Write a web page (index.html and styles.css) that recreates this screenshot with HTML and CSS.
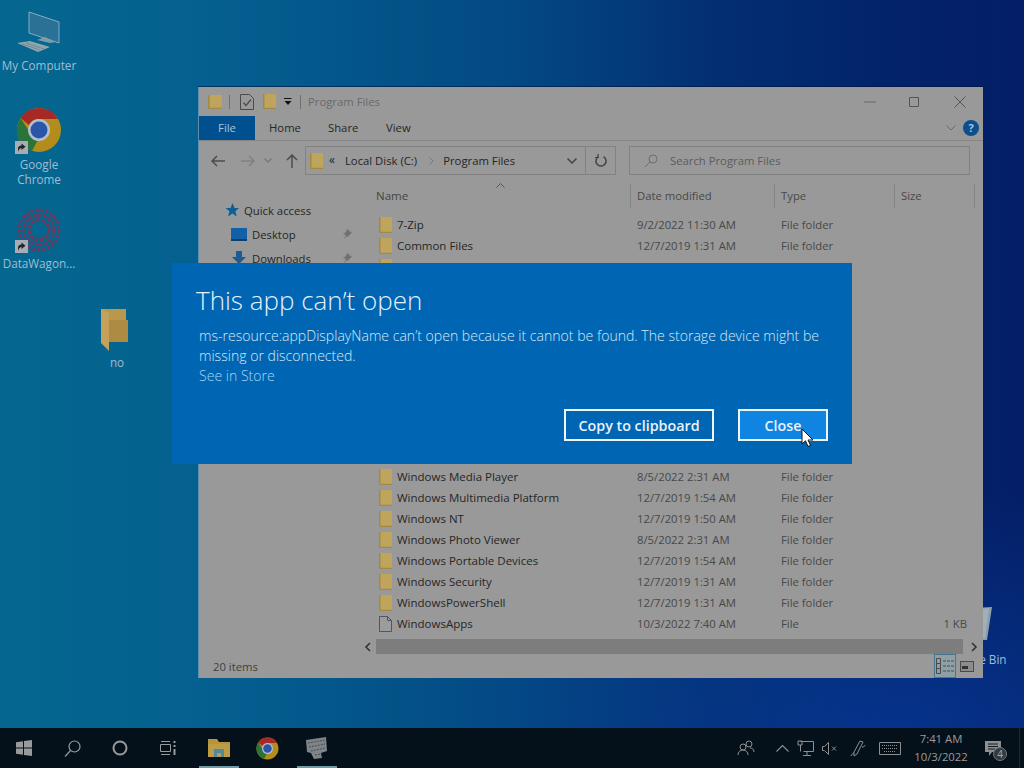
FILE: index.html
```html
<!DOCTYPE html>
<html lang="en">
<head>
  <meta charset="UTF-8">
  <title>This app can't open</title>
  <link rel="stylesheet" href="styles.css">
</head>
<body>
  <svg class="defs" width="0" height="0">
    <symbol id="folder" viewBox="1 1 13 14" preserveAspectRatio="none">
      <path d="M1 1h13v14H1z" fill="#bfa45c"/>
      <path d="M1 1h1.500v14H1zM1 13.800h13V15H1z" fill="#a38948"/>
    </symbol>
    <symbol id="shortcut" viewBox="0 0 13 13">
      <rect width="13" height="13" fill="#a9adb3"/>
      <path d="M3 11V7.500C3 5.500 4.500 4.500 6.500 4.500V2.500l4 3.200-4 3.200V7C5 7 4 8 3 11z" fill="#20262c"/>
    </symbol>
  </svg>

  <div class="desktop">
    <!-- desktop icons -->
    <div class="desk-icon icon-computer">
      <svg width="46" height="44" viewBox="0 0 46 44">
        <path d="M13 2l30 10v21L13 23z" fill="#2a7198" stroke="#86a9c4"/>
        <path d="M21 30l8-3 11 5-6 1z" fill="#7f9ba6"/>
        <path d="M1 33l13-2 20 6-12 5z" fill="#8ea6ab"/>
        <path d="M6 34l18 6M10 33l18 6" stroke="#6d8b98"/>
      </svg>
      <span>My Computer</span>
    </div>
    <div class="desk-icon icon-chrome">
      <div class="icon-box">
        <svg width="46" height="46" viewBox="0 0 46 46">
          <circle cx="23" cy="23" r="22" fill="#b48c1c"/>
          <path d="M23 1a22 22 0 0 1 19.100 11H23a11 11 0 0 0-10 6L4.500 11A22 22 0 0 1 23 1z" fill="#a52a26"/>
          <path d="M4.500 11l9 14a11 11 0 0 0 8 8.800L16 44A22 22 0 0 1 4.500 11z" fill="#2b7439"/>
          <circle cx="23" cy="23" r="11" fill="#b5bfcb"/>
          <circle cx="23" cy="23" r="8.500" fill="#2a56a8"/>
        </svg>
        <svg class="badge" width="13" height="13"><use href="#shortcut"/></svg>
      </div>
      <span>Google Chrome</span>
    </div>
    <div class="desk-icon icon-wagon">
      <div class="icon-box">
        <svg width="46" height="44" viewBox="0 0 46 44" fill="none" stroke="#6a3a5f" stroke-width="3" stroke-dasharray="3 2">
          <circle cx="23" cy="22" r="20"/>
          <circle cx="23" cy="22" r="15"/>
          <circle cx="23" cy="22" r="10" stroke="#74365a" stroke-dasharray="4 1.500"/>
          <path d="M23 1v8M23 35v8M2 22h8M36 22h8M8 7l6 6M32 31l6 6M38 7l-6 6M14 31l-6 6" stroke-width="2"/>
        </svg>
        <svg class="badge" width="13" height="13"><use href="#shortcut"/></svg>
      </div>
      <span>DataWagon...</span>
    </div>
    <div class="desk-icon icon-no">
      <svg width="28" height="44" viewBox="0 0 28 44">
        <path d="M1 1h25v33H9z" fill="#b9974c"/>
        <path d="M9 12h19v22H9z" fill="#ad8b42"/>
        <path d="M1 1l8 4v38l-8-8z" fill="#c4a25c"/>
      </svg>
      <span>no</span>
    </div>
    <div class="desk-icon icon-bin">
      <svg width="40" height="34" viewBox="0 0 40 34">
        <path d="M2 2l37-2-5 33H8z" fill="#8d9fac"/>
        <path d="M22 3l14-2-4 30-10 1z" fill="#a0afb8"/>
      </svg>
      <span>Recycle Bin</span>
    </div>

    <!-- explorer window -->
    <div class="window">
      <div class="titlebar">
        <svg class="ico-folder" width="14" height="14"><use href="#folder"/></svg>
        <i class="bar-sep"></i>
        <svg class="ico-check" width="14" height="16" viewBox="0 0 14 16" fill="none" stroke="#4a4a4a">
          <path d="M.5.500h9l4 4v11H.500z"/><path d="M3.500 8.500l2.500 3 5-6" stroke-width="1.200"/>
        </svg>
        <svg class="ico-folder2" width="13" height="15"><use href="#folder"/></svg>
        <svg class="ico-drop" width="8" height="8" viewBox="0 0 8 8"><path d="M0 .5h7.500" stroke="#111"/><path d="M.5 3h7L4 7z" fill="#111"/></svg>
        <i class="bar-sep sep2"></i>
        <span class="title-text">Program Files</span>
        <div class="win-buttons">
          <svg width="12" height="12" viewBox="0 0 12 12"><path d="M0 6h12" stroke="#666"/></svg>
          <svg width="12" height="12" viewBox="0 0 12 12"><path d="M1.500 1.500h9v9h-9z" fill="none" stroke="#555"/></svg>
          <svg width="12" height="12" viewBox="0 0 12 12"><path d="M.5.500l11 11M11.500.500l-11 11" stroke="#555"/></svg>
        </div>
      </div>

      <div class="ribbon">
        <span class="tab-file">File</span>
        <span class="tab tab-home">Home</span>
        <span class="tab tab-share">Share</span>
        <span class="tab tab-view">View</span>
        <svg class="ribbon-chevron" width="10" height="6" viewBox="0 0 10 6"><path d="M.5.500L5 5 9.500.500" fill="none" stroke="#6a6a6a"/></svg>
        <span class="help">?</span>
      </div>

      <div class="navrow">
        <div class="nav-arrows">
          <svg class="nav-back" width="14" height="12" viewBox="0 0 14 12" fill="none" stroke="#4c4c4c" stroke-width="1.500"><path d="M14 6H1M6 1L1 6l5 5"/></svg>
          <svg class="nav-fwd" width="14" height="12" viewBox="0 0 14 12" fill="none" stroke="#808080" stroke-width="1.500"><path d="M0 6h13M8 1l5 5-5 5"/></svg>
          <svg class="nav-down" width="8" height="5" viewBox="0 0 8 5" fill="none" stroke="#7a7a7a" stroke-width="1.500"><path d="M.5.500L4 4 7.500.500"/></svg>
          <svg class="nav-up" width="12" height="14" viewBox="0 0 12 14" fill="none" stroke="#4c4c4c" stroke-width="1.500"><path d="M6 14V1M1 6l5-5 5 5"/></svg>
        </div>
        <div class="address">
          <svg class="ico-addr" width="13" height="16"><use href="#folder"/></svg>
          <span class="crumb-more">&laquo;</span>
          <span>Local Disk (C:)</span>
          <svg class="crumb-sep" width="5" height="8" viewBox="0 0 5 8"><path d="M.5.500L4 4 .5 7.500" fill="none" stroke="#777"/></svg>
          <span>Program Files</span>
          <svg class="addr-drop" width="10" height="6" viewBox="0 0 10 6"><path d="M.5.500L5 5 9.500.500" fill="none" stroke="#444" stroke-width="1.500"/></svg>
          <div class="addr-refresh">
            <svg width="12" height="13" viewBox="0 0 12 13" fill="none" stroke="#444" stroke-width="1.500"><path d="M8.500 2.700A5 5 0 1 1 3.500 2.700"/><path d="M3 0v3.500H0" stroke-width="1.200"/></svg>
          </div>
        </div>
        <div class="search">
          <svg width="14" height="14" viewBox="0 0 14 14" fill="none" stroke="#6e6e6e"><circle cx="9" cy="5" r="4"/><path d="M6 8l-5 5"/></svg>
          <span>Search Program Files</span>
        </div>
      </div>

      <div class="body">
        <div class="sidebar">
          <div class="side-item side-quick">
            <svg width="14" height="14" viewBox="0 0 14 14"><path d="M7.500 0l2 5h4.500l-3.600 3.200 1.300 5.300-4.200-3-4.500 3 1.500-5.300L.5 5h5z" fill="#0e5f96"/></svg>
            Quick access
          </div>
          <div class="side-item side-sub">
            <svg width="16" height="13" viewBox="0 0 16 13"><rect width="16" height="12" fill="#1260a6"/><path d="M0 11h16v2H0z" fill="#0a3f70"/></svg>
            Desktop
            <svg class="pin" width="10" height="10" viewBox="0 0 10 10"><path d="M5 0l5 4-2 1-2 3-1-1-3 3 2-4-3-1 3-2z" fill="#707070"/></svg>
          </div>
          <div class="side-item side-sub">
            <svg width="16" height="15" viewBox="0 0 16 15"><path d="M5 0h6v6h4l-7 7-7-7h4z" fill="#1b5c94"/><path d="M2 13h12v2H2z" fill="#1b5c94"/></svg>
            Downloads
            <svg class="pin" width="10" height="10" viewBox="0 0 10 10"><path d="M5 0l5 4-2 1-2 3-1-1-3 3 2-4-3-1 3-2z" fill="#707070"/></svg>
          </div>
        </div>

        <div class="listing">
          <svg class="sort-caret" width="9" height="5" viewBox="0 0 9 5"><path d="M.5 4.500L4.500.500l4 4" fill="none" stroke="#555"/></svg>
          <div class="row head">
            <span class="col-name">Name</span>
            <span class="col-date">Date modified</span>
            <span class="col-type">Type</span>
            <span class="col-size">Size</span>
          </div>
          <div class="rows">
            <div class="row"><span class="col-name"><svg width="13" height="16"><use href="#folder"/></svg>7-Zip</span><span class="col-date">9/2/2022 11:30 AM</span><span class="col-type">File folder</span><span class="col-size"></span></div>
            <div class="row"><span class="col-name"><svg width="13" height="16"><use href="#folder"/></svg>Common Files</span><span class="col-date">12/7/2019 1:31 AM</span><span class="col-type">File folder</span><span class="col-size"></span></div>
            <div class="row"><span class="col-name"><svg width="13" height="16"><use href="#folder"/></svg>Google</span><span class="col-date">9/2/2022 11:30 AM</span><span class="col-type">File folder</span><span class="col-size"></span></div>
            <!-- rows under the dialog -->
            <div class="rows-covered"></div>
            <div class="row"><span class="col-name"><svg width="13" height="16"><use href="#folder"/></svg>Windows Media Player</span><span class="col-date">8/5/2022 2:31 AM</span><span class="col-type">File folder</span><span class="col-size"></span></div>
            <div class="row"><span class="col-name"><svg width="13" height="16"><use href="#folder"/></svg>Windows Multimedia Platform</span><span class="col-date">12/7/2019 1:54 AM</span><span class="col-type">File folder</span><span class="col-size"></span></div>
            <div class="row"><span class="col-name"><svg width="13" height="16"><use href="#folder"/></svg>Windows NT</span><span class="col-date">12/7/2019 1:50 AM</span><span class="col-type">File folder</span><span class="col-size"></span></div>
            <div class="row"><span class="col-name"><svg width="13" height="16"><use href="#folder"/></svg>Windows Photo Viewer</span><span class="col-date">8/5/2022 2:31 AM</span><span class="col-type">File folder</span><span class="col-size"></span></div>
            <div class="row"><span class="col-name"><svg width="13" height="16"><use href="#folder"/></svg>Windows Portable Devices</span><span class="col-date">12/7/2019 1:54 AM</span><span class="col-type">File folder</span><span class="col-size"></span></div>
            <div class="row"><span class="col-name"><svg width="13" height="16"><use href="#folder"/></svg>Windows Security</span><span class="col-date">12/7/2019 1:31 AM</span><span class="col-type">File folder</span><span class="col-size"></span></div>
            <div class="row"><span class="col-name"><svg width="13" height="16"><use href="#folder"/></svg>WindowsPowerShell</span><span class="col-date">12/7/2019 1:31 AM</span><span class="col-type">File folder</span><span class="col-size"></span></div>
            <div class="row"><span class="col-name"><svg width="13" height="16" viewBox="0 0 13 16" fill="#9c9c9c" stroke="#555"><path d="M.5.500h8l4 4v11H.5z"/><path d="M8.500.500v4h4" fill="none"/></svg>WindowsApps</span><span class="col-date">10/3/2022 7:40 AM</span><span class="col-type">File</span><span class="col-size">1 KB</span></div>
          </div>
          <div class="hscroll">
            <svg width="7" height="10" viewBox="0 0 7 10"><path d="M6 1L2 5l4 4" fill="none" stroke="#333" stroke-width="1.600"/></svg>
            <div class="hscroll-thumb"></div>
            <svg width="7" height="10" viewBox="0 0 7 10"><path d="M1 1l4 4-4 4" fill="none" stroke="#333" stroke-width="1.600"/></svg>
          </div>
        </div>
      </div>

      <div class="statusbar">
        <span>20 items</span>
        <div class="view-btns">
          <div class="view-btn active">
            <svg width="18" height="16" viewBox="0 0 18 16" fill="none" stroke="#4a4a4a"><path d="M.5.500h4v15h-4zM.5 5.500h4M.5 10.500h4"/><path d="M7 3h11M7 8h11M7 13h11" stroke-dasharray="3 1"/></svg>
          </div>
          <div class="view-btn">
            <svg width="14" height="11" viewBox="0 0 14 11"><rect x=".5" y=".5" width="13" height="10" fill="#8c8c8c" stroke="#4a4a4a"/><path d="M2 5h6v3H2z" fill="#333"/></svg>
          </div>
        </div>
      </div>
    </div>

    <!-- error dialog -->
    <div class="dialog">
      <h1>This app can&rsquo;t open</h1>
      <p>ms-resource:appDisplayName can&rsquo;t open because it cannot be found. The storage device might be missing or disconnected.</p>
      <a class="store-link">See in Store</a>
      <div class="dialog-buttons">
        <button class="btn btn-copy">Copy to clipboard</button>
        <button class="btn btn-close">Close</button>
      </div>
    </div>
    <svg class="cursor" width="14" height="20" viewBox="0 0 14 20"><path d="M1 1v15l3.500-3.200L7 18.500l2.600-1.200L7 12h5z" fill="#fff" stroke="#111"/></svg>
  </div>

  <!-- taskbar -->
  <div class="taskbar">
    <div class="task-btn">
      <svg width="16" height="16" viewBox="0 0 16 16" fill="#9a9a9a"><path d="M0 2.300l7-1v6.300H0zM8 1.100L16 0v7.600H8zM0 8.500h7v6.200l-7-1zM8 8.500h8V16l-8-1.100z"/></svg>
    </div>
    <div class="task-btn">
      <svg width="17" height="17" viewBox="0 0 17 17" fill="none" stroke="#9a9a9a" stroke-width="1.200"><circle cx="10.500" cy="6.500" r="5.500"/><path d="M6.500 10.500L1 16.500"/></svg>
    </div>
    <div class="task-btn">
      <svg width="16" height="16" viewBox="0 0 16 16" fill="none" stroke="#9a9a9a" stroke-width="2"><circle cx="8" cy="8" r="6.500"/></svg>
    </div>
    <div class="task-btn">
      <svg width="17" height="16" viewBox="0 0 17 16" fill="none" stroke="#9a9a9a"><path d="M.5 4.500h10v7H.5zM1 1.500h9M1 14.500h9"/><path d="M14.500 1v2M14.500 5v2M14.500 9v6" stroke-width="2"/></svg>
    </div>
    <div class="task-btn task-active">
      <svg width="24" height="20" viewBox="0 0 24 20"><path d="M1 1h9l2 3h11v15H1z" fill="#b8953c"/><path d="M1 6h22v13H1z" fill="#bd9b47"/><path d="M7 11h10v8H7z" fill="#4c8ba0"/><path d="M10 15h4v4h-4z" fill="#bd9b47"/></svg>
    </div>
    <div class="task-btn">
      <svg width="23" height="23" viewBox="0 0 46 46">
        <circle cx="23" cy="23" r="22" fill="#b48c1c"/>
        <path d="M23 1a22 22 0 0 1 19.100 11H23a11 11 0 0 0-10 6L4.500 11A22 22 0 0 1 23 1z" fill="#a52a26"/>
        <path d="M4.500 11l9 14a11 11 0 0 0 8 8.800L16 44A22 22 0 0 1 4.500 11z" fill="#2b7439"/>
        <circle cx="23" cy="23" r="11" fill="#b5bfcb"/>
        <circle cx="23" cy="23" r="8.500" fill="#2a56a8"/>
      </svg>
    </div>
    <div class="task-btn task-active">
      <svg width="23" height="22" viewBox="0 0 23 22"><path d="M1 3l20-3 1 14-6 2 1 5-8 1-3-6-4-1z" fill="#7e8488"/><path d="M3 6l17-3M4 10l16-3M6 14l14-3M10 18l6-1" stroke="#4a4f52" stroke-dasharray="2 1"/></svg>
    </div>

    <div class="tray">
      <svg class="tray-people" width="18" height="16" viewBox="0 0 18 16" fill="none" stroke="#8f8f8f"><circle cx="12" cy="4" r="3"/><circle cx="6" cy="7" r="3"/><path d="M1 15c0-3 2-5 5-5s5 2 5 5M13 8c2 0 4 1 4 4"/></svg>
      <svg class="tray-caret" width="13" height="8" viewBox="0 0 13 8"><path d="M.5 7.500l6-6 6 6" fill="none" stroke="#8f8f8f" stroke-width="1.100"/></svg>
      <svg class="tray-net" width="17" height="17" viewBox="0 0 17 17" fill="none" stroke="#8f8f8f"><path d="M3.500 1.500h13v10h-10M1 1h4v4H1zM3.500 5v6.500M10 11.500v4M6 15.500h8"/></svg>
      <svg class="tray-vol" width="15" height="13" viewBox="0 0 15 13" fill="none" stroke="#8f8f8f"><path d="M.5 4.500h2l4-4v12l-4-4h-2zM10 4.500l4 4M14 4.500l-4 4"/></svg>
      <svg class="tray-pen" width="16" height="17" viewBox="0 0 16 17" fill="none" stroke="#8f8f8f"><path d="M4 12L10 1l3 1-6 12-3 2zM12 7c2 0 3-1 3-2M1 16c1-2 2-3 3-3"/></svg>
      <svg class="tray-kbd" width="22" height="13" viewBox="0 0 22 13" fill="none" stroke="#8f8f8f"><path d="M.5.500h21v12H.5z"/><path d="M3 3.500h16M3 6.500h16M5 9.500h12" stroke-dasharray="1 1"/></svg>
      <div class="clock"><span>7:41 AM</span><span>10/3/2022</span></div>
      <div class="notif">
        <svg width="16" height="15" viewBox="0 0 16 15"><path d="M0 0h16v11H7l-3 4v-4H0z" fill="#8f8f8f"/><path d="M3 3h10M3 5.500h10M3 8h7" stroke="#111a22"/></svg>
        <span class="notif-count">4</span>
      </div>
    </div>
  </div>
</body>
</html>
```

FILE: styles.css
```css
* {
  box-sizing: border-box;
}
html, body {
  margin: 0;
  height: 100%;
  overflow: hidden;
}
body {
  width: 1024px;
  height: 768px;
  font-family: "Open Sans", "Noto Sans", sans-serif;
  font-size: 11.300px;
  display: flex;
  flex-direction: column;
}
.defs {
  position: absolute;
}
svg {
  flex: none;
  display: block;
}

/* desktop */
.desktop {
  position: relative;
  flex: 1;
  background:
    radial-gradient(ellipse 500px 240px at 900px 728px, rgba(8, 62, 160, .6) 0%, rgba(8, 62, 160, 0) 100%),
    linear-gradient(90deg, #05678f 0%, #046090 20%, #034a82 50%, #032f70 70%, #02226a 88%, #041f66 100%);
}
.desk-icon {
  position: absolute;
  width: 78px;
  display: flex;
  flex-direction: column;
  align-items: center;
  text-align: center;
  color: #9fbdd3;
  font-size: 11.700px;
  line-height: 15px;
}
.icon-box {
  position: relative;
}
.badge {
  position: absolute;
  left: -1px;
  bottom: -1px;
}
.icon-computer { left: 0; top: 10px; gap: 4px; }
.icon-chrome { left: 0; top: 107px; gap: 4px; }
.icon-chrome span { width: 60px; }
.icon-wagon { left: 0; top: 208px; gap: 4px; }
.icon-no { left: 78px; top: 308px; gap: 3px; }
.icon-no svg { margin-right: 6px; }
.icon-bin { left: 937px; top: 607px; gap: 11px; }
.icon-bin svg { margin-right: 6px; }

/* explorer */
.window {
  position: absolute;
  left: 198px;
  top: 87px;
  width: 785px;
  height: 591px;
  background: #999;
  border-left: 1px solid #5f8ea8;
  box-shadow: 0 -1px 0 rgba(0, 20, 60, .6);
  color: #262626;
  display: flex;
  flex-direction: column;
}
.titlebar {
  height: 29px;
  display: flex;
  align-items: center;
  padding-left: 9px;
}
.bar-sep {
  width: 1px;
  height: 14px;
  background: #6f6f6f;
  margin-left: 7px;
}
.ico-check { margin-left: 10px; }
.ico-folder2 { margin-left: 9px; }
.ico-drop { margin-left: 8px; }
.sep2 { margin-left: 8px; }
.title-text {
  margin-left: 7px;
  color: #6a6a6a;
}
.win-buttons {
  margin-left: auto;
  display: flex;
  gap: 32px;
  padding-right: 17px;
}
.win-buttons svg:last-child { margin-left: 2px; }
.ribbon {
  height: 25px;
  display: flex;
  align-items: center;
  border-bottom: 1px solid #858585;
  position: relative;
}
.tab-file {
  width: 56px;
  height: 24px;
  background: #00508f;
  color: #a9c4dc;
  line-height: 23px;
  text-align: center;
}
.tab { position: absolute; top: 4px; }
.tab-home { left: 70px; }
.tab-share { left: 129px; }
.tab-view { left: 187px; }
.ribbon-chevron { margin-left: auto; margin-right: 7px; }
.help {
  width: 16px;
  height: 16px;
  border-radius: 50%;
  background: #0c4f8c;
  color: #a8c4dc;
  font-weight: 700;
  font-size: 11px;
  line-height: 16px;
  text-align: center;
  margin-right: 4px;
}
.navrow {
  height: 37px;
  display: flex;
  align-items: flex-start;
  padding-top: 5px;
}
.nav-arrows {
  width: 106px;
  height: 29px;
  display: flex;
  align-items: center;
  padding-left: 12px;
}
.nav-fwd { margin-left: 16px; }
.nav-down { margin-left: 9px; }
.nav-up { margin-left: 14px; }
.address {
  width: 311px;
  height: 29px;
  border: 1px solid #828282;
  display: flex;
  align-items: center;
  padding-left: 4px;
  gap: 9px;
}
.crumb-more { margin: -3px 1px 0 -3px; font-size: 12px; }
.crumb-sep { margin-left: 3px; }
.addr-drop { margin-left: auto; }
.addr-refresh {
  width: 30px;
  height: 27px;
  border-left: 1px solid #828282;
  display: flex;
  align-items: center;
  justify-content: center;
  margin-left: -1px;
}
.search {
  width: 341px;
  height: 29px;
  margin-left: 13px;
  border: 1px solid #828282;
  display: flex;
  align-items: center;
  gap: 12px;
  padding-left: 14px;
  color: #5c5c5c;
}
.body {
  flex: 1;
  display: flex;
  min-height: 0;
}
.sidebar {
  width: 177px;
  padding-top: 20px;
}
.side-item {
  height: 24px;
  display: flex;
  align-items: center;
  gap: 5px;
}
.side-quick { padding-left: 26px; }
.side-sub { padding-left: 32px; }
.pin { margin-left: auto; margin-right: 24px; }
.listing {
  flex: 1;
  position: relative;
  display: flex;
  flex-direction: column;
}
.sort-caret {
  position: absolute;
  left: 120px;
  top: 5px;
}
.row {
  display: grid;
  grid-template-columns: 255px 144px 120px 80px;
  height: 21px;
  align-items: center;
  color: #262626;
}
.row .col-name {
  display: flex;
  align-items: center;
  gap: 5px;
  padding-left: 3px;
  font-size: 11.500px;
}
.row .col-date, .row .col-type {
  color: #484848;
  padding-left: 6px;
}
.row .col-size {
  color: #484848;
  text-align: right;
  padding-right: 8px;
}
.head {
  height: 24px;
  margin-top: 6px;
}
.head span {
  height: 24px;
  line-height: 24px;
  border-right: 1px solid #848484;
  color: #444;
}
.head .col-name { padding-left: 0; }
.head .col-size { text-align: left; padding-left: 6px; }
.rows {
  flex: 1;
  padding-top: 6px;
}
.rows-covered {
  height: 189px;
}
.hscroll {
  height: 15px;
  display: flex;
  align-items: center;
  margin-left: -12px;
  margin-right: 5px;
}
.hscroll-thumb {
  flex: 1;
  height: 15px;
  background: #7d7d7d;
  margin: 0 8px 0 5px;
}
.statusbar {
  height: 24px;
  display: flex;
  align-items: center;
  justify-content: space-between;
  padding-left: 14px;
  color: #3f3f3f;
}
.view-btns {
  display: flex;
  align-self: stretch;
  align-items: center;
  padding-right: 8px;
  gap: 3px;
}
.view-btn {
  width: 16px;
  height: 22px;
  display: flex;
  align-items: center;
  justify-content: center;
}
.view-btn.active {
  width: 22px;
  height: 24px;
  border: 1px solid #43788e;
  background: #8ea0a5;
}

/* dialog */
.dialog {
  position: absolute;
  left: 172px;
  top: 263px;
  width: 680px;
  height: 201px;
  background: #0065b3;
  color: #d6e9f7;
  padding: 21px 24px 0 27px;
}
.dialog h1 {
  margin: 0 0 0 -3px;
  font-size: 26px;
  font-weight: 300;
  line-height: 33px;
  color: #e4f1fa;
}
.dialog p {
  margin: 9px 0 0;
  font-size: 14.070px;
  font-weight: 300;
  line-height: 20px;
}
.store-link {
  display: block;
  font-size: 14.070px;
  font-weight: 300;
  line-height: 20px;
  color: #a5d7f7;
}
.dialog-buttons {
  position: absolute;
  left: 392px;
  top: 146px;
  display: flex;
  gap: 24px;
}
.btn {
  height: 32px;
  border: 2px solid #eef6fc;
  background: transparent;
  color: #e8f3fb;
  font-family: inherit;
  font-size: 14.300px;
  font-weight: 600;
  padding: 0;
}
.btn-copy { width: 150px; }
.btn-close { width: 90px; background: #0f84e0; }
.cursor {
  position: absolute;
  left: 801px;
  top: 428px;
}

/* taskbar */
.taskbar {
  height: 40px;
  background: #04111b;
  display: flex;
  align-items: stretch;
}
.task-btn {
  width: 48px;
  flex: none;
  display: flex;
  align-items: center;
  justify-content: center;
  position: relative;
}
.task-btn:nth-child(n+5) { width: 49px; }
.task-btn:nth-child(5) { margin-left: 2px; }
.task-active::after {
  content: "";
  position: absolute;
  left: 5px;
  right: 4px;
  bottom: 0;
  height: 2px;
  background: #6f9aa8;
}
.tray {
  margin-left: auto;
  display: flex;
  align-items: center;
  color: #9a9a9a;
}
.tray-caret { margin-left: 21px; }
.tray-net { margin-left: 8px; }
.tray-vol { margin-left: 8px; }
.tray-pen { margin-left: 13px; }
.tray-kbd { margin-left: 13px; }
.clock {
  width: 64px;
  margin-left: 8px;
  display: flex;
  flex-direction: column;
  align-items: center;
  line-height: 18px;
}
.notif {
  position: relative;
  width: 47px;
  height: 40px;
  margin-right: 4px;
  border-right: 1px solid #1e2a33;
  display: flex;
  align-items: center;
  padding-left: 12px;
}
.notif-count {
  position: absolute;
  left: 20px;
  top: 19px;
  width: 14px;
  height: 14px;
  border-radius: 50%;
  background: #333b42;
  border: 1px solid #777;
  color: #aaa;
  font-size: 10px;
  line-height: 12px;
  text-align: center;
}
```
